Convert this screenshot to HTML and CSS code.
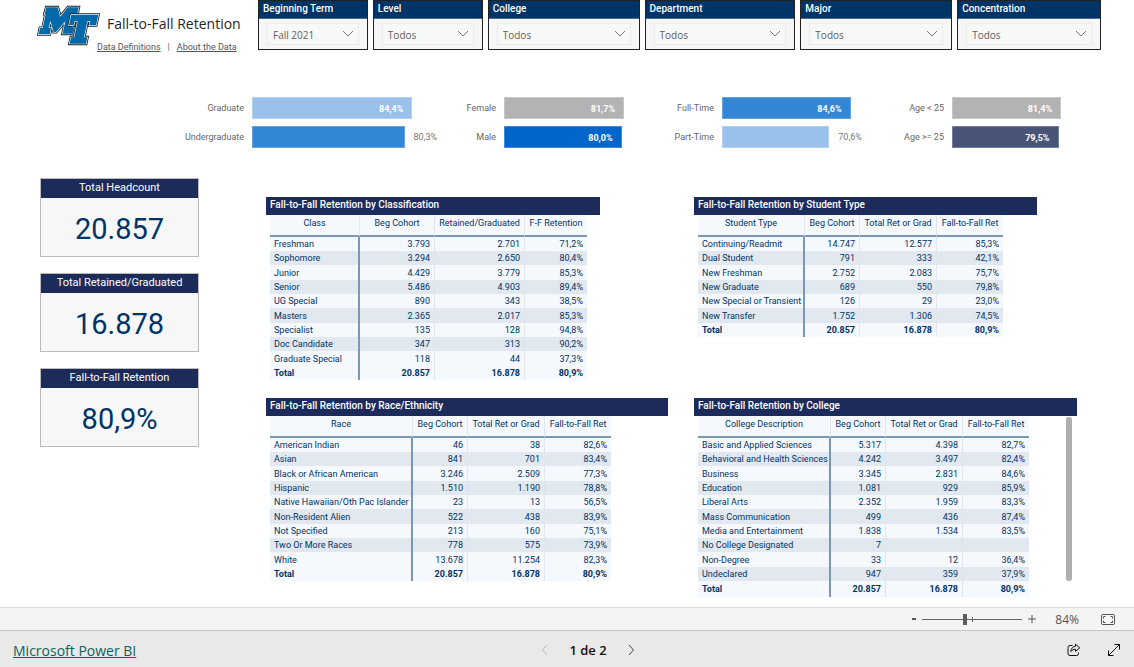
FILE: index.html
```html
<!DOCTYPE html>
<html lang="en">
<head>
<meta charset="utf-8">
<title>Fall-to-Fall Retention</title>
<link rel="stylesheet" href="styles.css">
</head>
<body>
<div class="page">
  <header class="header">
    <div class="brand">
      <svg class="logo" viewBox="111 15 189 123" role="img" aria-label="MT">
        <defs>
          <path id="logo-m" d="M139 22H173L181 50L204 22H236L232 42H224L216 82H224L220 101H188L192 82L196 64L168 96H161L151 62L146 84H153L149 103H116L120 84H128L137 42H134Z"/>
          <path id="logo-t" d="M214 44H295L288 76H268L271 64H262L252 112H262L258 131H209L213 112H223L233 64H224L221 76H207Z"/>
        </defs>
        <use href="#logo-m" class="logo-edge"/><use href="#logo-m" class="logo-rim"/><use href="#logo-m" class="logo-fill"/>
        <use href="#logo-t" class="logo-edge"/><use href="#logo-t" class="logo-rim"/><use href="#logo-t" class="logo-fill"/>
      </svg>
      <div class="brand-text">
        <h1 class="title">Fall-to-Fall Retention</h1>
        <nav class="links"><a href="#definitions">Data Definitions</a><span>|</span><a href="#about">About the Data</a></nav>
      </div>
    </div>
    <form class="filters">
      <div class="filter"><label for="term">Beginning Term</label><div class="select-wrap"><select id="term"><option>Fall 2021</option></select><svg class="chevron" viewBox="0 0 12 8"><path d="M1 1L6 6L11 1"/></svg></div></div>
      <div class="filter"><label for="level">Level</label><div class="select-wrap"><select id="level"><option>Todos</option></select><svg class="chevron" viewBox="0 0 12 8"><path d="M1 1L6 6L11 1"/></svg></div></div>
      <div class="filter"><label for="college">College</label><div class="select-wrap"><select id="college"><option>Todos</option></select><svg class="chevron" viewBox="0 0 12 8"><path d="M1 1L6 6L11 1"/></svg></div></div>
      <div class="filter"><label for="department">Department</label><div class="select-wrap"><select id="department"><option>Todos</option></select><svg class="chevron" viewBox="0 0 12 8"><path d="M1 1L6 6L11 1"/></svg></div></div>
      <div class="filter"><label for="major">Major</label><div class="select-wrap"><select id="major"><option>Todos</option></select><svg class="chevron" viewBox="0 0 12 8"><path d="M1 1L6 6L11 1"/></svg></div></div>
      <div class="filter"><label for="concentration">Concentration</label><div class="select-wrap"><select id="concentration"><option>Todos</option></select><svg class="chevron" viewBox="0 0 12 8"><path d="M1 1L6 6L11 1"/></svg></div></div>
    </form>
  </header>

  <section class="charts">
    <div class="chart chart-level">
      <span class="bar-label">Graduate</span><div class="track"><div class="bar sky" style="width:84.4%">84,4%</div></div>
      <span class="bar-label">Undergraduate</span><div class="track"><div class="bar blue" style="width:80.3%"></div><span class="outside">80,3%</span></div>
    </div>
    <div class="chart chart-gender">
      <span class="bar-label">Female</span><div class="track"><div class="bar gray" style="width:81.7%">81,7%</div></div>
      <span class="bar-label">Male</span><div class="track"><div class="bar royal" style="width:80%">80,0%</div></div>
    </div>
    <div class="chart chart-load">
      <span class="bar-label">Full-Time</span><div class="track"><div class="bar blue" style="width:84.6%">84,6%</div></div>
      <span class="bar-label">Part-Time</span><div class="track"><div class="bar sky" style="width:70.6%"></div><span class="outside">70,6%</span></div>
    </div>
    <div class="chart chart-age">
      <span class="bar-label">Age &lt; 25</span><div class="track"><div class="bar gray" style="width:81.4%">81,4%</div></div>
      <span class="bar-label">Age &gt;= 25</span><div class="track"><div class="bar slate" style="width:79.5%">79,5%</div></div>
    </div>
  </section>

  <main class="main">
    <aside class="cards">
      <section class="card"><h2>Total Headcount</h2><p>20.857</p></section>
      <section class="card"><h2>Total Retained/Graduated</h2><p>16.878</p></section>
      <section class="card"><h2>Fall-to-Fall Retention</h2><p>80,9%</p></section>
    </aside>

    <div class="panels">
      <section class="panel panel-class">
        <h2>Fall-to-Fall Retention by Classification</h2>
        <div class="panel-body">
          <table>
            <colgroup><col class="w-class"><col class="w-count-wide"><col class="w-retained"><col class="w-rate-narrow"></colgroup>
            <thead><tr><th>Class</th><th>Beg Cohort</th><th>Retained/Graduated</th><th>F-F Retention</th></tr></thead>
            <tbody>
              <tr><td>Freshman</td><td>3.793</td><td>2.701</td><td>71,2%</td></tr>
              <tr><td>Sophomore</td><td>3.294</td><td>2.650</td><td>80,4%</td></tr>
              <tr><td>Junior</td><td>4.429</td><td>3.779</td><td>85,3%</td></tr>
              <tr><td>Senior</td><td>5.486</td><td>4.903</td><td>89,4%</td></tr>
              <tr><td>UG Special</td><td>890</td><td>343</td><td>38,5%</td></tr>
              <tr><td>Masters</td><td>2.365</td><td>2.017</td><td>85,3%</td></tr>
              <tr><td>Specialist</td><td>135</td><td>128</td><td>94,8%</td></tr>
              <tr><td>Doc Candidate</td><td>347</td><td>313</td><td>90,2%</td></tr>
              <tr><td>Graduate Special</td><td>118</td><td>44</td><td>37,3%</td></tr>
            </tbody>
            <tfoot><tr><td>Total</td><td>20.857</td><td>16.878</td><td>80,9%</td></tr></tfoot>
          </table>
        </div>
      </section>

      <section class="panel panel-type">
        <h2>Fall-to-Fall Retention by Student Type</h2>
        <div class="panel-body">
          <table>
            <colgroup><col class="w-type"><col class="w-count"><col class="w-total"><col class="w-rate"></colgroup>
            <thead><tr><th>Student Type</th><th>Beg Cohort</th><th>Total Ret or Grad</th><th>Fall-to-Fall Ret</th></tr></thead>
            <tbody>
              <tr><td>Continuing/Readmit</td><td>14.747</td><td>12.577</td><td>85,3%</td></tr>
              <tr><td>Dual Student</td><td>791</td><td>333</td><td>42,1%</td></tr>
              <tr><td>New Freshman</td><td>2.752</td><td>2.083</td><td>75,7%</td></tr>
              <tr><td>New Graduate</td><td>689</td><td>550</td><td>79,8%</td></tr>
              <tr><td>New Special or Transient</td><td>126</td><td>29</td><td>23,0%</td></tr>
              <tr><td>New Transfer</td><td>1.752</td><td>1.306</td><td>74,5%</td></tr>
            </tbody>
            <tfoot><tr><td>Total</td><td>20.857</td><td>16.878</td><td>80,9%</td></tr></tfoot>
          </table>
        </div>
      </section>

      <section class="panel panel-race">
        <h2>Fall-to-Fall Retention by Race/Ethnicity</h2>
        <div class="panel-body">
          <table>
            <colgroup><col class="w-race"><col class="w-count"><col class="w-total"><col class="w-rate"></colgroup>
            <thead><tr><th>Race</th><th>Beg Cohort</th><th>Total Ret or Grad</th><th>Fall-to-Fall Ret</th></tr></thead>
            <tbody>
              <tr><td>American Indian</td><td>46</td><td>38</td><td>82,6%</td></tr>
              <tr><td>Asian</td><td>841</td><td>701</td><td>83,4%</td></tr>
              <tr><td>Black or African American</td><td>3.246</td><td>2.509</td><td>77,3%</td></tr>
              <tr><td>Hispanic</td><td>1.510</td><td>1.190</td><td>78,8%</td></tr>
              <tr><td>Native Hawaiian/Oth Pac Islander</td><td>23</td><td>13</td><td>56,5%</td></tr>
              <tr><td>Non-Resident Alien</td><td>522</td><td>438</td><td>83,9%</td></tr>
              <tr><td>Not Specified</td><td>213</td><td>160</td><td>75,1%</td></tr>
              <tr><td>Two Or More Races</td><td>778</td><td>575</td><td>73,9%</td></tr>
              <tr><td>White</td><td>13.678</td><td>11.254</td><td>82,3%</td></tr>
            </tbody>
            <tfoot><tr><td>Total</td><td>20.857</td><td>16.878</td><td>80,9%</td></tr></tfoot>
          </table>
        </div>
      </section>

      <section class="panel panel-college">
        <h2>Fall-to-Fall Retention by College</h2>
        <div class="panel-body">
          <table>
            <colgroup><col class="w-college"><col class="w-count"><col class="w-total"><col class="w-rate"></colgroup>
            <thead><tr><th>College Description</th><th>Beg Cohort</th><th>Total Ret or Grad</th><th>Fall-to-Fall Ret</th></tr></thead>
            <tbody>
              <tr><td>Basic and Applied Sciences</td><td>5.317</td><td>4.398</td><td>82,7%</td></tr>
              <tr><td>Behavioral and Health Sciences</td><td>4.242</td><td>3.497</td><td>82,4%</td></tr>
              <tr><td>Business</td><td>3.345</td><td>2.831</td><td>84,6%</td></tr>
              <tr><td>Education</td><td>1.081</td><td>929</td><td>85,9%</td></tr>
              <tr><td>Liberal Arts</td><td>2.352</td><td>1.959</td><td>83,3%</td></tr>
              <tr><td>Mass Communication</td><td>499</td><td>436</td><td>87,4%</td></tr>
              <tr><td>Media and Entertainment</td><td>1.838</td><td>1.534</td><td>83,5%</td></tr>
              <tr><td>No College Designated</td><td>7</td><td></td><td></td></tr>
              <tr><td>Non-Degree</td><td>33</td><td>12</td><td>36,4%</td></tr>
              <tr><td>Undeclared</td><td>947</td><td>359</td><td>37,9%</td></tr>
            </tbody>
            <tfoot><tr><td>Total</td><td>20.857</td><td>16.878</td><td>80,9%</td></tr></tfoot>
          </table>
          <div class="scrollbar"></div>
        </div>
      </section>
    </div>
  </main>

  <div class="zoom-bar">
    <button class="step" type="button" aria-label="Zoom out"><svg width="6" height="8" viewBox="0 0 6 8"><path class="thick" d="M1 4H5"/></svg></button>
    <input class="slider" type="range" min="0" max="100" value="42" aria-label="Zoom">
    <button class="step plus" type="button" aria-label="Zoom in"><svg width="8" height="8" viewBox="0 0 8 8"><path d="M0 4H8M4 0V8"/></svg></button>
    <span class="zoom-value">84%</span>
    <button class="fit" type="button" aria-label="Fit to page"><svg width="14" height="11" viewBox="0 0 14 11"><rect x=".5" y=".5" width="13" height="10" rx="1"/><path d="M4.500 2.500H2.500V4.500M2.500 6.500V8.500H4.500M9.500 2.500H11.500V4.500M11.500 6.500V8.500H9.500"/></svg></button>
  </div>

  <footer class="footer">
    <a class="powerbi" href="#powerbi">Microsoft Power BI</a>
    <div class="pager">
      <button class="prev" type="button" aria-label="Previous page" disabled><svg width="8" height="12" viewBox="0 0 8 12"><path d="M6 1L1.500 6L6 11"/></svg></button>
      <span>1 de 2</span>
      <button class="next" type="button" aria-label="Next page"><svg width="8" height="12" viewBox="0 0 8 12"><path d="M2 1L6.500 6L2 11"/></svg></button>
    </div>
    <div class="actions">
      <button type="button" aria-label="Share"><svg width="14" height="14" viewBox="0 0 14 14"><path d="M5.500 2.500H3A2 2 0 0 0 1 4.500V10.500A2 2 0 0 0 3 12.500H9.500A2 2 0 0 0 11.500 10.500V9.500"/><path d="M8.500 1.200L12.800 4.800L8.500 8.400V6.300C6.500 6.300 5 7 3.800 8.600C4 5.500 5.700 3.600 8.500 3.300Z"/></svg></button>
      <button type="button" aria-label="Full screen"><svg width="14" height="14" viewBox="0 0 14 14"><path d="M1.500 12.500L12.500 1.500M7.500 1.500H12.500V6.500M1.500 7.500V12.500H6.500"/></svg></button>
    </div>
  </footer>
</div>
</body>
</html>
```
FILE: styles.css
```css
* { box-sizing: border-box; }
body {
  margin: 0;
  background: #fff;
  font-family: Roboto, "Open Sans", sans-serif;
  color: #252423;
}
h1, h2, p { margin: 0; font-weight: 400; }
button { border: 0; padding: 0; background: none; display: flex; align-items: center; justify-content: center; color: inherit; }
button svg { fill: none; stroke: currentColor; display: block; }
.page { min-height: 100vh; display: flex; flex-direction: column; }

.header { display: flex; padding: 0 33px 0 37px; height: 49px; }
.brand { display: flex; width: 221px; flex: none; }
.logo { width: 63px; height: 41px; margin-top: 5px; flex: none; }
.logo-edge { fill: #222; stroke: #222; stroke-width: 9px; }
.logo-rim { fill: #e8eef2; stroke: #e8eef2; stroke-width: 4px; }
.logo-fill { fill: #0069aa; }
.brand-text { padding: 14px 0 0 7px; white-space: nowrap; }
.title { font-family: "Open Sans", sans-serif; font-size: 14px; line-height: 20px; }
.links { display: flex; gap: 7px; font-size: 9px; line-height: 12px; margin: 7px 0 0 -10px; color: #666; }
.links a { color: #555; }

.filters { flex: 1; display: grid; grid-template-columns: 110fr 110fr 152fr 151fr 152fr 144fr; gap: 5px; }
.filter { border: 1px solid #222; background: #f6f6f6; }
.filter label { display: block; height: 18px; background: #036; color: #fff; font-size: 10px; font-weight: 500; line-height: 16px; padding-left: 4px; border-bottom: 1px solid #4a6c90; }
.select-wrap { display: grid; align-items: center; margin: 4px 8px; }
.select-wrap > * { grid-area: 1 / 1; }
.select-wrap select { appearance: none; width: 100%; height: 22px; border: 1px solid #ececec; border-radius: 0; background: #f8f8f8; padding: 1px 5px 0; font: 10px "Open Sans", sans-serif; color: #605e5c; }
.chevron { width: 12px; height: 8px; margin-right: 5px; justify-self: end; fill: none; stroke: #777; pointer-events: none; }

.charts { display: grid; grid-template-columns: 262fr 185fr 199fr 188fr; gap: 24px; padding: 48px 48px 0 180px; }
.chart { display: grid; column-gap: 8px; row-gap: 7px; align-items: center; }
.chart-level { grid-template-columns: 64px 1fr; }
.chart-gender { grid-template-columns: 30px 1fr; }
.chart-load { grid-template-columns: 39px 1fr; }
.chart-age { grid-template-columns: 46px 1fr; }
.bar-label { font-size: 9px; line-height: 22px; color: #666; display: flex; justify-content: flex-end; white-space: nowrap; }
.track { display: flex; align-items: center; }
.bar { height: 22px; line-height: 22px; padding-right: 8px; color: #fff; font-size: 9px; font-weight: 700; text-align: right; border: 1px solid #ffffff40; flex: none; }
.outside { font-size: 9px; color: #777; margin-left: 9px; }
.sky { background: #99c1eb; }
.blue { background: #3385d6; }
.gray { background: #b3b3b3; }
.royal { background: #06c; }
.slate { background: #495479; }

.main { display: flex; flex: 1; padding: 30px 0 8px 40px; }
.cards { width: 159px; flex: none; display: flex; flex-direction: column; gap: 16px; }
.card { height: 79px; border: 1px solid #bbb; background: #f7f7f7; text-align: center; }
.card h2 { height: 19px; background: #1c2b5a; color: #fff; font-size: 11px; line-height: 18px; }
.card p { font-size: 29px; line-height: 62px; color: #036; }

.panels { flex: 1; display: grid; grid-template-columns: 428fr 440fr; grid-template-rows: auto auto; row-gap: 18px; align-content: start; padding: 19px 0 0 67px; }
.panel-class, .panel-type { width: 78%; }
.panel-race { width: 94%; }
.panel-college { width: 87%; }
.panel h2 { height: 18px; background: #1c2b5a; color: #fff; font-size: 10px; font-weight: 500; line-height: 16px; padding-left: 4px; }
.panel-body { display: flex; justify-content: space-between; padding: 0 5px 0 4px; }
table { border-collapse: separate; border-spacing: 0; table-layout: fixed; width: 0; flex: none; background: #f5f9fe; color: #036; font-size: 9px; line-height: 14px; }
.w-class { width: 90px; }
.w-count-wide { width: 75px; }
.w-retained { width: 90px; }
.w-rate-narrow { width: 62px; }
.w-type { width: 107px; }
.w-race { width: 143px; }
.w-college { width: 133px; }
.w-count { width: 55px; }
.w-total { width: 77px; }
.w-rate { width: 66px; }
th, td { padding: 0 4px; white-space: nowrap; border-right: 1px solid #dfe6ee; }
th { height: 22px; padding: 0; font-weight: 400; text-align: center; vertical-align: top; line-height: 17px; border-bottom: 2px solid #7c97b6; }
td { height: 14px; text-align: right; }
td:first-child { text-align: left; border-right: 2px solid #7c97b6; }
th:last-child, td:last-child { border-right: 0; }
tbody tr:nth-child(3n) td { height: 15px; }
tbody tr:nth-child(even) { background: #e1e8ef; }
tfoot td { font-weight: 700; }
.panel-college tfoot td { height: 16px; }
.scrollbar { width: 6px; height: 164px; margin-top: 1px; border-radius: 3px; background: #b0aeac; }

.zoom-bar { display: flex; align-items: center; justify-content: flex-end; height: 23px; padding-right: 18px; border-top: 1px solid #ddd; background: #f4f4f4; color: #555; }
.step { width: 8px; height: 16px; }
.thick { stroke-width: 2px; }
.slider { appearance: none; width: 100px; height: 12px; margin: 0 6px 0 4px; background: linear-gradient(#666, #666) 50px 50% / 1px 5px no-repeat, linear-gradient(#666, #666) 0 50% / 100% 1px no-repeat; }
.slider::-webkit-slider-thumb { appearance: none; width: 4px; height: 11px; background: #605e5c; }
.zoom-value { font-family: "Open Sans", sans-serif; font-size: 12px; margin: 0 22px 0 19px; }
.fit { width: 14px; height: 16px; margin-right: 1px; }

.footer { display: grid; grid-template-columns: 1fr auto 1fr; align-items: center; height: 37px; padding: 2px 13px 0; border-top: 1px solid #c6c6c6; background: #e9e9e9; color: #111; font-family: "Open Sans", sans-serif; }
.powerbi { font-size: 14px; color: #0b645a; justify-self: start; }
.pager { display: flex; align-items: center; gap: 20px; margin-left: 42px; font-size: 13px; font-weight: 600; }
.pager .prev { color: #bbb; }
.pager .next { color: #444; }
.actions { display: flex; justify-content: flex-end; gap: 26px; }
```
